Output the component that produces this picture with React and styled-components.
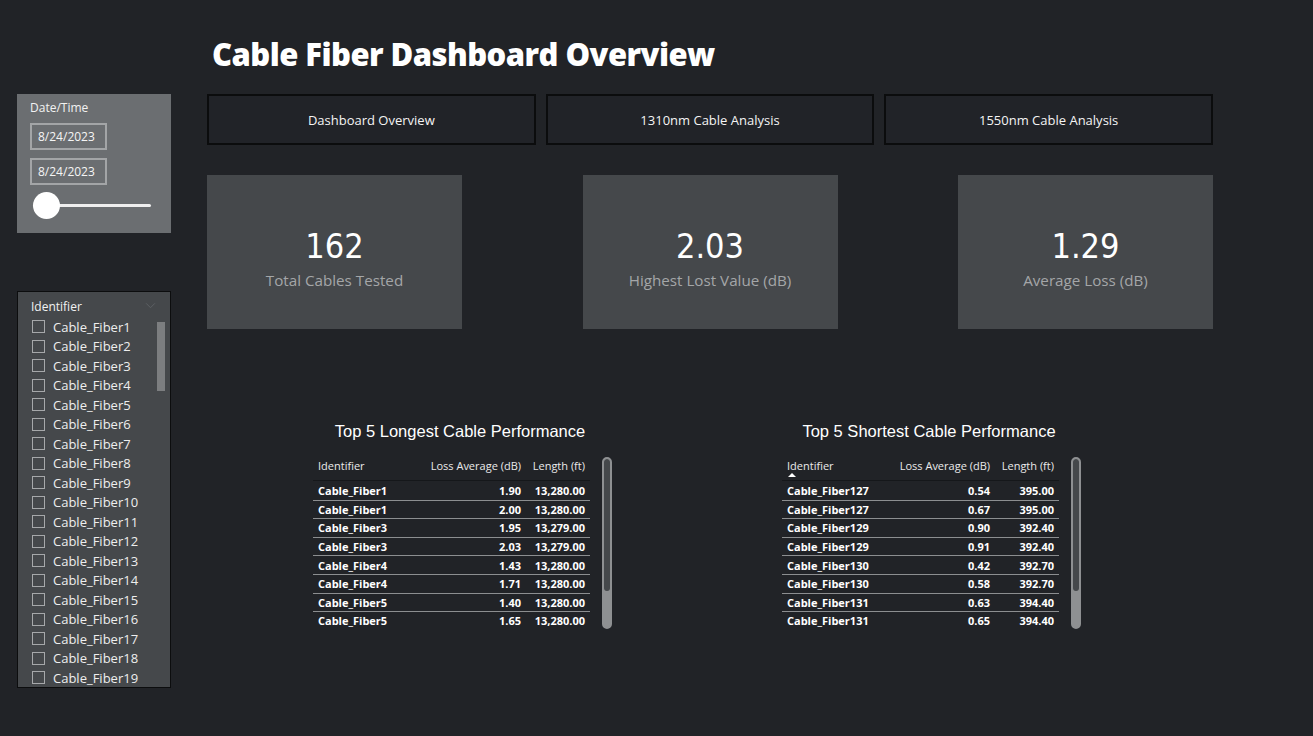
import React from "react";
import styled, { createGlobalStyle } from "styled-components";

const UI_FONT = `"Segoe UI", "Open Sans", "Noto Sans", sans-serif`;

const GlobalStyle = createGlobalStyle`
  html, body {
    margin: 0;
    padding: 0;
    background: #212327;
    height: 100%;
  }
  body {
    font-family: ${UI_FONT};
    color: #ffffff;
    overflow: hidden;
  }
`;

const longest = [
  ["Cable_Fiber1", "1.90", "13,280.00"],
  ["Cable_Fiber1", "2.00", "13,280.00"],
  ["Cable_Fiber3", "1.95", "13,279.00"],
  ["Cable_Fiber3", "2.03", "13,279.00"],
  ["Cable_Fiber4", "1.43", "13,280.00"],
  ["Cable_Fiber4", "1.71", "13,280.00"],
  ["Cable_Fiber5", "1.40", "13,280.00"],
  ["Cable_Fiber5", "1.65", "13,280.00"],
];

const shortest = [
  ["Cable_Fiber127", "0.54", "395.00"],
  ["Cable_Fiber127", "0.67", "395.00"],
  ["Cable_Fiber129", "0.90", "392.40"],
  ["Cable_Fiber129", "0.91", "392.40"],
  ["Cable_Fiber130", "0.42", "392.70"],
  ["Cable_Fiber130", "0.58", "392.70"],
  ["Cable_Fiber131", "0.63", "394.40"],
  ["Cable_Fiber131", "0.65", "394.40"],
];

const fibers = Array.from({ length: 19 }, (_, i) => `Cable_Fiber${i + 1}`);

const App = () => {
  return (
    <>
      <GlobalStyle />
      <Page>
        <Sidebar>
          <DatePanel>
            <PanelLabel>Date/Time</PanelLabel>
            <DateBox>8/24/2023</DateBox>
            <DateBox>8/24/2023</DateBox>
            <Slider>
              <SliderKnob />
            </Slider>
          </DatePanel>
          <ListPanel>
            <ListHeader>
              <PanelLabel>Identifier</PanelLabel>
              <Chevron viewBox="0 0 12 8">
                <path d="M1 1.5 L6 6.5 L11 1.5" fill="none" stroke="#5f6266" strokeWidth="1" />
              </Chevron>
            </ListHeader>
            <ListBody>
              <ListItems>
                {fibers.map((f) => (
                  <ListItem key={f}>
                    <CheckBox />
                    {f}
                  </ListItem>
                ))}
              </ListItems>
              <ListScroll />
            </ListBody>
          </ListPanel>
        </Sidebar>

        <Main>
          <Title>Cable Fiber Dashboard Overview</Title>
          <Tabs>
            <Tab>Dashboard Overview</Tab>
            <Tab>1310nm Cable Analysis</Tab>
            <Tab>1550nm Cable Analysis</Tab>
          </Tabs>
          <Cards>
            <Card>
              <CardValue>162</CardValue>
              <CardLabel>Total Cables Tested</CardLabel>
            </Card>
            <Card>
              <CardValue>2.03</CardValue>
              <CardLabel>Highest Lost Value (dB)</CardLabel>
            </Card>
            <Card>
              <CardValue>1.29</CardValue>
              <CardLabel>Average Loss (dB)</CardLabel>
            </Card>
          </Cards>
          <Tables>
            <PerfTable title="Top 5 Longest Cable Performance" rows={longest} />
            <PerfTable title="Top 5 Shortest Cable Performance" rows={shortest} sorted />
          </Tables>
        </Main>
      </Page>
    </>
  );
};

const PerfTable = ({ title, rows, sorted }) => (
  <TableBlock>
    <TableTitle>{title}</TableTitle>
    <TableWrap>
      <Grid>
        <HeadRow>
          <HeadCell>
            Identifier
            {sorted && <SortMark />}
          </HeadCell>
          <HeadCell align="right">Loss Average (dB)</HeadCell>
          <HeadCell align="right">Length (ft)</HeadCell>
        </HeadRow>
        {rows.map((r, i) => (
          <Row key={i}>
            <Cell>{r[0]}</Cell>
            <Cell align="right">{r[1]}</Cell>
            <Cell align="right">{r[2]}</Cell>
          </Row>
        ))}
      </Grid>
      <TableScroll>
        <TableThumb />
      </TableScroll>
    </TableWrap>
  </TableBlock>
);

export default App;

const Page = styled.div`
  display: flex;
  width: 1313px;
  height: 736px;
`;

const Sidebar = styled.div`
  display: flex;
  flex-direction: column;
  gap: 58px;
  width: 154px;
  padding: 94px 0 0 17px;
`;

const DatePanel = styled.div`
  height: 139px;
  box-sizing: border-box;
  background: #6b6e71;
  padding: 7px 0 0 13px;
  display: flex;
  flex-direction: column;
`;

const PanelLabel = styled.div`
  font-size: 12px;
  color: #f2f2f2;
  line-height: 14px;
`;

const DateBox = styled.div`
  width: 77px;
  height: 27px;
  box-sizing: border-box;
  border: 2px solid #a3a5a7;
  font-size: 12px;
  line-height: 23px;
  padding-left: 6px;
  color: #f5f5f5;
  margin-top: 8px;
`;

const Slider = styled.div`
  position: relative;
  margin-top: 19px;
  margin-left: 3px;
  width: 118px;
  height: 3px;
  background: #efefef;
  border-radius: 2px;
`;

const SliderKnob = styled.div`
  position: absolute;
  left: 0;
  top: -12px;
  width: 27px;
  height: 27px;
  border-radius: 50%;
  background: #ffffff;
`;

const ListPanel = styled.div`
  height: 397px;
  box-sizing: border-box;
  background: #45484b;
  border: 1px solid #0c0d0e;
  padding: 8px 0 0 13px;
  overflow: hidden;
`;

const ListHeader = styled.div`
  display: flex;
  justify-content: space-between;
  align-items: center;
  padding-right: 14px;
`;

const Chevron = styled.svg`
  width: 11px;
  height: 7px;
  margin-top: -4px;
`;

const ListBody = styled.div`
  display: flex;
  justify-content: space-between;
  padding-right: 5px;
`;

const ListItems = styled.div`
  display: flex;
  flex-direction: column;
  padding-top: 3px;
`;

const ListItem = styled.div`
  display: flex;
  align-items: center;
  gap: 8px;
  height: 19.5px;
  font-size: 13px;
  color: #eeeeee;
  padding-left: 1px;
`;

const CheckBox = styled.span`
  width: 11px;
  height: 11px;
  border: 1px solid #a6a8aa;
  flex: none;
`;

const ListScroll = styled.div`
  width: 8px;
  height: 69px;
  margin-top: 8px;
  background: #7c7e80;
`;

const Main = styled.div`
  margin-left: 36px;
  width: 1006px;
  display: flex;
  flex-direction: column;
`;

const Title = styled.h1`
  margin: 0;
  height: 94px;
  box-sizing: border-box;
  padding: 34px 0 0 5px;
  font-family: "Open Sans", sans-serif;
  font-weight: 800;
  font-size: 31px;
  line-height: 40px;
  letter-spacing: -0.55px;
  color: #ffffff;
`;

const Tabs = styled.div`
  display: grid;
  grid-template-columns: repeat(3, 1fr);
  gap: 10px;
  height: 51px;
`;

const Tab = styled.div`
  border: 2px solid #0b0c0d;
  background: #212328;
  display: flex;
  align-items: center;
  justify-content: center;
  padding-top: 1px;
  box-sizing: border-box;
  font-size: 13px;
  color: #f4f4f4;
`;

const Cards = styled.div`
  display: flex;
  justify-content: space-between;
  margin-top: 30px;
`;

const Card = styled.div`
  width: 255px;
  height: 154px;
  background: #45484b;
  display: flex;
  flex-direction: column;
  align-items: center;
  justify-content: center;
  padding-top: 14px;
  box-sizing: border-box;
`;

const CardValue = styled.div`
  font-family: "DejaVu Sans Condensed", "DejaVu Sans", sans-serif;
  font-stretch: condensed;
  font-size: 34px;
  line-height: 38px;
  color: #ffffff;
`;

const CardLabel = styled.div`
  font-size: 15.2px;
  line-height: 22px;
  color: #a4a6a8;
  margin-top: 4px;
`;

const Tables = styled.div`
  display: flex;
  gap: 170px;
  padding-left: 106px;
  margin-top: 92px;
`;

const TableBlock = styled.div`
  width: 299px;
  display: flex;
  flex-direction: column;
`;

const TableTitle = styled.div`
  font-family: "Liberation Sans", Arial, sans-serif;
  font-size: 16.5px;
  line-height: 20px;
  text-align: center;
  color: #ffffff;
  padding-right: 5px;
`;

const TableWrap = styled.div`
  display: flex;
  align-items: flex-start;
  gap: 12px;
  margin-top: 16px;
`;

const Grid = styled.div`
  width: 277px;
  display: flex;
  flex-direction: column;
`;

const HeadRow = styled.div`
  display: grid;
  grid-template-columns: 1fr 110px 64px;
  height: 24px;
  border-bottom: 1px solid #15171a;
  padding-top: 2px;
  box-sizing: border-box;
`;

const HeadCell = styled.div`
  position: relative;
  font-size: 11px;
  line-height: 14px;
  color: #eaeaea;
  text-align: ${(p) => p.align || "left"};
  padding: 0 5px;
  white-space: nowrap;
`;

const SortMark = styled.span`
  position: absolute;
  left: 6px;
  top: 14px;
  width: 0;
  height: 0;
  border-left: 4px solid transparent;
  border-right: 4px solid transparent;
  border-bottom: 4px solid #ffffff;
`;

const Row = styled.div`
  display: grid;
  grid-template-columns: 1fr 110px 64px;
  height: 18.6px;
  align-items: center;
  border-top: 1px solid #8c8e90;
  box-sizing: border-box;
  &:nth-child(2) {
    border-top: none;
  }
`;

const Cell = styled.div`
  font-size: 11px;
  font-weight: 700;
  color: #ffffff;
  text-align: ${(p) => p.align || "left"};
  padding: 0 5px;
  white-space: nowrap;
`;

const TableScroll = styled.div`
  width: 6px;
  height: 168px;
  border: 2px solid #8e9092;
  border-radius: 5px;
  background: #8e9092;
  overflow: hidden;
  display: flex;
  flex-direction: column;
`;

const TableThumb = styled.div`
  height: 132px;
  background: #45484b;
  border-radius: 3px;
`;
